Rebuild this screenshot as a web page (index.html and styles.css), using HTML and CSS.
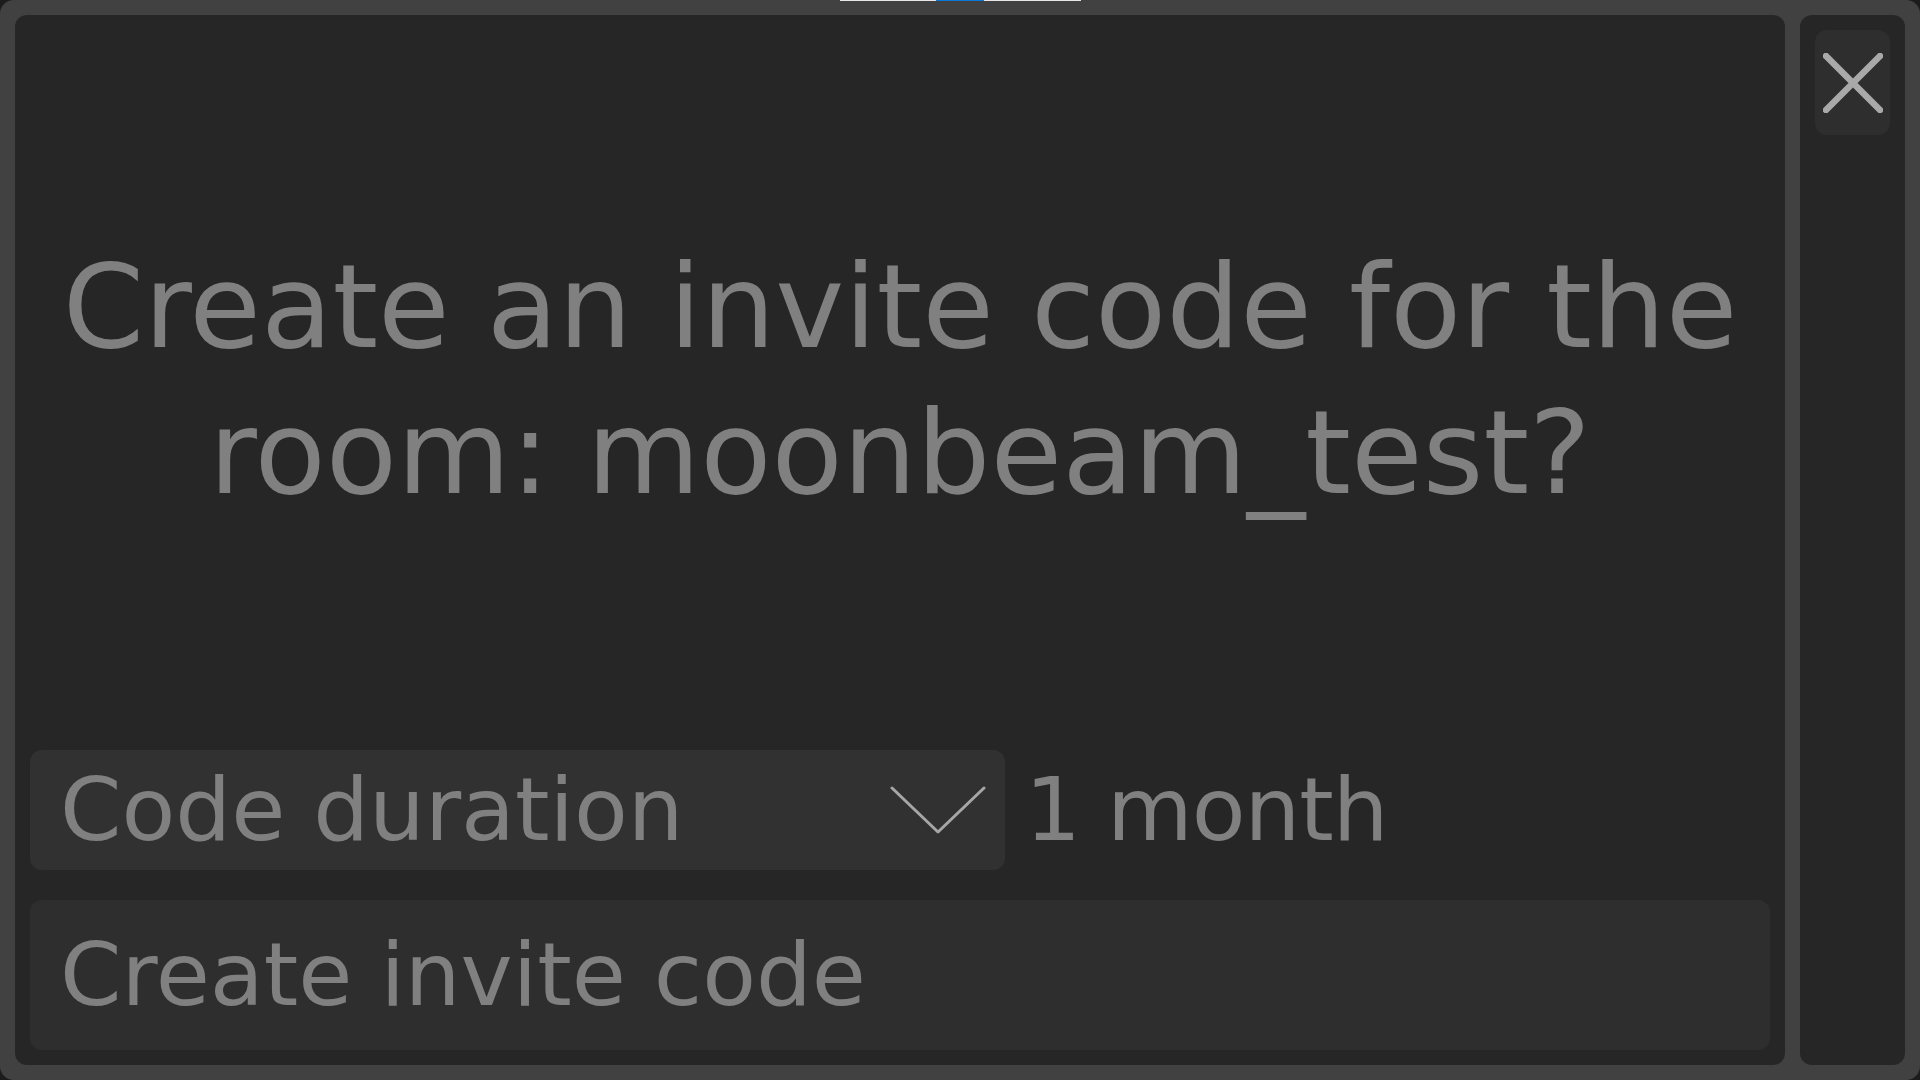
FILE: index.html
```html
<!DOCTYPE html>
<html>
<head>
<meta charset="utf-8">
<link rel="stylesheet" href="styles.css">
</head>
<body>
<div class="frame">
  <div class="topline"><span class="seg-white"></span><span class="seg-blue"></span><span class="seg-white2"></span></div>
  <div class="main">
    <div class="title-area">
      <h1 class="title">Create an invite code for the<br>room: moonbeam_test?</h1>
    </div>
    <div class="controls">
      <div class="row">
        <div class="dropdown">
          <span class="dd-label">Code duration</span>
          <svg class="chev" width="96" height="48" viewBox="0 0 96 48"><polyline points="2,2 48,46 94,2" fill="none" stroke="#a6a6a6" stroke-width="3" stroke-linecap="round" stroke-linejoin="round"/></svg>
        </div>
        <span class="value">1 month</span>
      </div>
      <div class="create-btn"><span>Create invite code</span></div>
    </div>
  </div>
  <div class="side">
    <div class="close-btn">
      <svg width="60" height="60" viewBox="0 0 60 60"><path d="M3 3 L57 57 M57 3 L3 57" stroke="#a9a9a9" stroke-width="6.5" stroke-linecap="round"/></svg>
    </div>
  </div>
</div>
</body>
</html>
```
FILE: styles.css
```css
html, body {
  margin: 0;
  padding: 0;
  background: #1c1c1c;
}
body {
  width: 1920px;
  height: 1080px;
  overflow: hidden;
  font-family: "DejaVu Sans", sans-serif;
}
.frame {
  position: relative;
  box-sizing: border-box;
  width: 1920px;
  height: 1080px;
  background: #414141;
  border-radius: 14px;
  padding: 15px;
  display: flex;
  gap: 15px;
}
.topline {
  position: absolute;
  top: 0;
  left: 840px;
  height: 1px;
  display: flex;
}
.seg-white { width: 96px; background: #e6e6e6; }
.seg-blue { width: 48px; background: #0a78d4; }
.seg-white2 { width: 97px; background: #e6e6e6; }
.main {
  flex: 1;
  background: #262626;
  border-radius: 12px;
  padding: 15px;
  display: flex;
  flex-direction: column;
}
.title-area {
  flex: 1;
  display: flex;
  align-items: center;
  justify-content: center;
  padding-bottom: 20px;
}
.title {
  margin: 0;
  font-weight: normal;
  font-size: 116.5px;
  line-height: 146px;
  color: #808080;
  text-align: center;
}
.controls {
  display: flex;
  flex-direction: column;
  gap: 30px;
}
.row {
  display: flex;
  align-items: center;
  gap: 20px;
}
.dropdown {
  box-sizing: border-box;
  width: 975px;
  height: 120px;
  background: #313131;
  border-radius: 12px;
  padding: 0 19px 0 30px;
  display: flex;
  align-items: center;
  justify-content: space-between;
}
.dd-label, .value, .create-btn span {
  font-size: 88px;
  color: #808080;
  line-height: 1;
}
.value { letter-spacing: -1px; }
.chev { display: block; }
.create-btn {
  box-sizing: border-box;
  height: 150px;
  background: #2e2e2e;
  border-radius: 12px;
  padding: 0 30px;
  display: flex;
  align-items: center;
}
.side {
  width: 105px;
  background: #262626;
  border-radius: 12px;
  padding: 15px 15px;
  box-sizing: border-box;
}
.close-btn {
  width: 75px;
  height: 105px;
  background: #2e2e2e;
  border-radius: 12px;
  display: flex;
  align-items: center;
  justify-content: center;
}
.close-btn svg { display: block; }
```
